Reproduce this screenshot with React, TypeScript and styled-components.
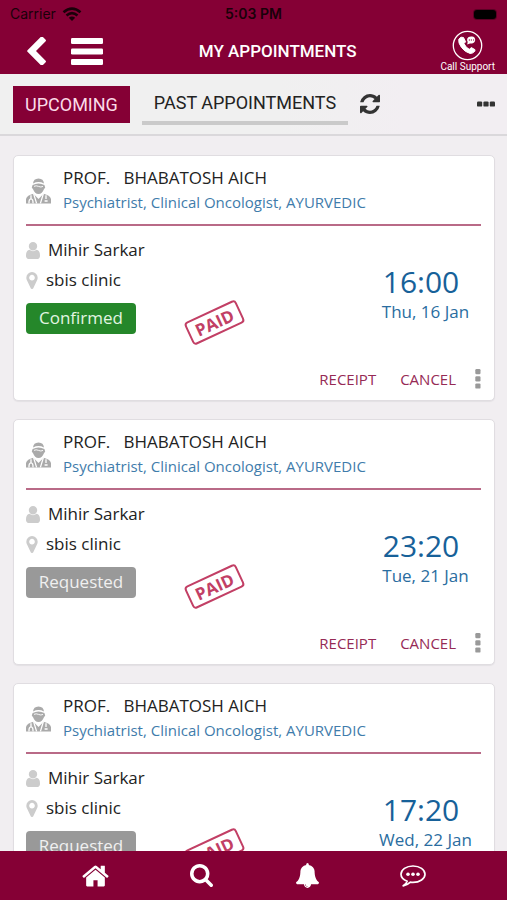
import React from "react";
import styled, { createGlobalStyle } from "styled-components";

const wine = "#850035";
const body = '"Open Sans", sans-serif';
const system = 'Inter, sans-serif';

const GlobalStyle = createGlobalStyle`
  *, *::before, *::after { box-sizing: border-box; }
  body { margin: 0; background: #f1eef1; font-family: ${body}; color: #222; }
  button { margin: 0; padding: 0; border: 0; background: none; color: inherit; font: inherit; cursor: pointer; }
  h1, h2, p { margin: 0; font-weight: 400; }
`;

const Screen = styled.div`
  display: flex;
  flex-direction: column;
  height: 100vh;
`;

const Header = styled.header`
  flex: none;
  background: ${wine};
  color: #fff;
`;

const StatusBar = styled.div`
  display: grid;
  grid-template-columns: 1fr auto 1fr;
  align-items: center;
  height: 28px;
  padding: 0 10px;
  color: #1a0009;
  font: 400 14px/28px ${system};
`;

const Carrier = styled.span`
  display: flex;
  align-items: center;
  gap: 6px;
`;

const Clock = styled.time`
  font-weight: 600;
`;

const Battery = styled.span`
  justify-self: end;
  width: 22px;
  height: 9px;
  margin-right: 1px;
  border-radius: 3px;
  background: #000;
  box-shadow: 0 0 0 1px #5a0024;
`;

const TitleBar = styled.div`
  display: grid;
  grid-template-columns: auto 1fr auto;
  align-items: center;
  height: 46px;
  padding: 0 12px 0 26px;
`;

const HeaderActions = styled.div`
  display: flex;
  align-items: center;
  height: 38px;
  gap: 25px;
`;

const IconButton = styled.button`
  display: flex;
  align-items: center;
  justify-content: center;
`;

const Title = styled.h1`
  padding-left: 12px;
  text-align: center;
  font: 500 17px/40px Roboto, sans-serif;
`;

const SupportButton = styled.button`
  display: flex;
  flex-direction: column;
  align-items: center;
  font: 400 10px/12px Roboto, sans-serif;
`;

const TabBar = styled.nav`
  flex: none;
  display: flex;
  align-items: center;
  gap: 12px;
  height: 62px;
  padding: 0 12px 0 13px;
  background: linear-gradient(90deg, #f0f0f0 55%, #f2eef2 80%);
  border-bottom: 2px solid #dad8db;
`;

const Tab = styled.button<{ $active?: boolean }>`
  height: ${(p) => (p.$active ? "37px" : "41px")};
  padding: 0 12px;
  white-space: nowrap;
  font: 400 18px/37px Roboto, sans-serif;
  color: ${(p) => (p.$active ? "#fbdbe8" : "#222")};
  background: ${(p) => (p.$active ? wine : "transparent")};
  border-bottom: ${(p) => (p.$active ? "0" : "4px solid #cacaca")};
`;

const Spacer = styled.span`
  flex: 1;
`;

const List = styled.main`
  flex: 1;
  min-height: 0;
  overflow-y: auto;
  scrollbar-width: none;
  display: flex;
  flex-direction: column;
  gap: 18px;
  padding: 19px 12px 18px 13px;
`;

const Card = styled.article`
  flex: none;
  padding: 7px 13px 9px 12px;
  background: #fff;
  border: 1px solid #e0dde1;
  border-radius: 5px;
  box-shadow: 0 1px 1px #e3e0e4;
`;

const CardHeader = styled.header`
  display: flex;
  align-items: center;
  gap: 12px;
  height: 63px;
  padding-bottom: 10px;
  border-bottom: 2px solid #b96a87;
`;

const DoctorName = styled.h2`
  font-size: 17px;
  line-height: 27px;
  white-space: pre;
`;

const Specialty = styled.p`
  font-size: 15px;
  line-height: 22px;
  color: #3f7cab;
`;

const CardBody = styled.div`
  display: grid;
  grid-template-columns: 1fr auto 1fr;
  height: 141px;
  padding-top: 9px;
`;

const Details = styled.div`
  display: flex;
  flex-direction: column;
  align-items: flex-start;
`;

const Detail = styled.p`
  display: flex;
  align-items: center;
  gap: 8px;
  font-size: 17px;
  line-height: 30px;
`;

const Status = styled.span<{ $confirmed: boolean }>`
  width: 110px;
  height: 31px;
  margin-top: 8px;
  border-radius: 4px;
  background: ${(p) => (p.$confirmed ? "#25872a" : "#999")};
  color: ${(p) => (p.$confirmed ? "#e2f5e2" : "#f0f0f0")};
  font-size: 17px;
  line-height: 30px;
  text-align: center;
`;

const Stamp = styled.span`
  align-self: start;
  width: 57px;
  height: 25px;
  margin: 75px 79px 0 0;
  border: 2px solid #c23f65;
  border-radius: 4px;
  color: #c23f65;
  font-size: 17px;
  font-weight: 700;
  line-height: 21px;
  text-align: center;
  transform: rotate(-25deg);
`;

const Slot = styled.time`
  justify-self: end;
  display: flex;
  flex-direction: column;
  width: 111px;
  padding-top: 29px;
  text-align: center;
  color: #2a6da0;
  font-size: 17px;
  line-height: 24px;
`;

const Hour = styled.span`
  padding-right: 9px;
  color: #176199;
  font-size: 30px;
  line-height: 36px;
`;

const CardFooter = styled.footer`
  display: flex;
  align-items: center;
  justify-content: flex-end;
  gap: 24px;
  height: 24px;
  color: #962a55;
  font-size: 15px;
  line-height: 24px;
`;

const MoreButton = styled(IconButton)`
  margin-left: -6px;
  width: 7px;
`;

const BottomBar = styled.nav`
  flex: none;
  display: grid;
  grid-template-columns: repeat(4, 1fr);
  align-items: center;
  height: 49px;
  padding: 0 41px 0 43px;
  background: ${wine};
  color: #fff;
`;

const paths = {
  back: "M1427 301l-531 531 531 531q19 19 19 45t-19 45l-166 166q-19 19-45 19t-45-19l-742-742q-19-19-19-45t19-45l742-742q19-19 45-19t45 19l166 166q19 19 19 45t-19 45z",
  refresh: "M1639 1056q0 5-1 7-64 268-268 434.5t-478 166.5q-146 0-282.5-55t-243.5-157l-129 129q-19 19-45 19t-45-19-19-45v-448q0-26 19-45t45-19h448q26 0 45 19t19 45-19 45l-137 137q71 66 161 102t187 36q134 0 250-65t186-179q11-17 53-117 8-23 30-23h192q13 0 22.5 9.5t9.5 22.5zm25-800v448q0 26-19 45t-45 19h-448q-26 0-45-19t-19-45 19-45l138-138q-148-137-349-137-134 0-250 65t-186 179q-11 17-53 117-8 23-30 23h-199q-13 0-22.5-9.5t-9.5-22.5v-7q65-268 270-434.5t480-166.5q146 0 284 55.5t245 156.5l130-129q19-19 45-19t45 19 19 45z",
  search: "M1216 832q0-185-131.5-316.5t-316.5-131.5-316.5 131.5-131.5 316.5 131.5 316.5 316.5 131.5 316.5-131.5 131.5-316.5zm512 832q0 52-38 90t-90 38q-54 0-90-38l-343-342q-179 124-399 124-143 0-273.5-55.5t-225-150-150-225-55.5-273.5 55.5-273.5 150-225 225-150 273.5-55.5 273.5 55.5 225 150 150 225 55.5 273.5q0 220-124 399l343 343q37 37 37 90z",
  home: "M1472 992v480q0 26-19 45t-45 19h-384v-384h-256v384h-384q-26 0-45-19t-19-45v-480q0-1 .5-3t.5-3l575-474 575 474q1 2 1 6zm223-69l-62 74q-8 9-21 11h-3q-13 0-21-7l-692-577-692 577q-12 8-24 7-13-2-21-11l-62-74q-8-10-7-23.5t11-21.5l719-599q32-26 76-26t76 26l244 204v-195q0-14 9-23t23-9h192q14 0 23 9t9 23v408l219 182q10 8 11 21.5t-7 23.5z",
  bell: "M912 1696q0-16-16-16-59 0-101.5-42.5t-42.5-101.5q0-16-16-16t-16 16q0 73 51.5 124.5t124.5 51.5q16 0 16-16zm816-288q0 52-38 90t-90 38h-448q0 106-75 181t-181 75-181-75-75-181h-448q-52 0-90-38t-38-90q50-42 91-88t85-119.5 74.5-158.5 50-206 19.5-260q0-152 117-282.5t307-158.5q-8-19-8-39 0-40 28-68t68-28 68 28 28 68q0 20-8 39 190 28 307 158.5t117 282.5q0 139 19.5 260t50 206 74.5 158.5 85 119.5 91 88z",
  marker: "M1152 640q0-106-75-181t-181-75-181 75-75 181 75 181 181 75 181-75 75-181zm256 0q0 109-33 179l-364 774q-16 33-47.5 52t-67.5 19-67.5-19-46.5-52l-365-774q-33-70-33-179 0-212 150-362t362-150 362 150 150 362z",
  user: "M1536 1399q0 109-62.5 187t-150.5 78h-854q-88 0-150.5-78t-62.5-187q0-85 8.5-160.5t31.5-152 58.5-131 94-89 134.5-34.5q131 128 313 128t313-128q76 0 134.5 34.5t94 89 58.5 131 31.5 152 8.5 160.5zm-256-887q0 159-112.5 271.5t-271.5 112.5-271.5-112.5-112.5-271.5 112.5-271.5 271.5-112.5 271.5 112.5 112.5 271.5z",
};

function Glyph({ name, width, height, box = "0 0 1792 1792", color = "currentColor" }: {
  name: keyof typeof paths; width: number; height: number; box?: string; color?: string;
}) {
  return (
    <svg width={width} height={height} viewBox={box} fill={color} aria-hidden="true">
      <path d={paths[name]} />
    </svg>
  );
}

const WifiIcon = () => (
  <svg width="20" height="14" viewBox="0 0 20 14" fill="none" stroke="#1a0009" strokeWidth="2.6" aria-hidden="true">
    <path d="M1.5 5.2Q10-2 18.5 5.2M4.5 8.4Q10 3.8 15.5 8.4" />
    <path d="M10 14L6.8 10.8Q10 8.4 13.2 10.8Z" fill="#1a0009" stroke="none" />
  </svg>
);

const MenuIcon = () => (
  <svg width="32" height="27" viewBox="0 0 32 27" fill="#fff" aria-hidden="true">
    <rect width="32" height="6" rx="1.3" />
    <rect y="10.5" width="32" height="6" rx="1.3" />
    <rect y="21" width="32" height="6" rx="1.3" />
  </svg>
);

const SupportIcon = () => (
  <svg width="31" height="31" viewBox="0 0 31 31" fill="none" aria-hidden="true">
    <circle cx="15.5" cy="15.5" r="14.2" stroke="#fff" strokeWidth="1.3" />
    <path d="M9 7.2L6.8 9.2Q6 12.8 9.5 17.5T18 23.4Q20.5 23.8 22.8 21.3L23 19.7L19.4 17.6L17.3 19.3Q13.7 17.7 12 13.6L13.6 11.8L11.5 7.5Z" fill="#fff" stroke="#fff" strokeLinejoin="round" />
    <path d="M15.3 8.6Q16.1 6.4 19 6.4H20Q23.2 6.8 23.2 10Q23 13 20 13.4H18L15.2 14.5L15.7 12Q14.6 10.4 15.3 8.6Z" fill="#fff" />
    <path d="M16.8 10h1.2M18.8 10H20M21 10h1.1" stroke={wine} />
  </svg>
);

const DotsIcon = ({ vertical = false }: { vertical?: boolean }) => (
  <svg width={vertical ? 6 : 18} height={vertical ? 20 : 6} viewBox={vertical ? "0 0 6 20" : "0 0 18 6"} fill={vertical ? "#999" : "#333"} aria-hidden="true">
    {[0, 1, 2].map((i) => (
      <rect key={i} x={vertical ? 0.3 : i * 6.4} y={vertical ? i * 7.2 : 0.4} width="5.2" height="5.2" rx="1.2" />
    ))}
  </svg>
);

const DoctorSvg = styled.svg`
  flex: none;
  margin-top: 4px;
`;

const DoctorIcon = () => (
  <DoctorSvg width="25" height="26" viewBox="0 0 25 26" aria-hidden="true">
    <path d="M7 5.4Q7.4 0.6 12.5 0.4Q17.6 0.6 18 5.4Q12.5 2.8 7 5.4Z" fill="#aaa" />
    <path d="M6.6 7Q12.5 4 18.4 7L19.2 9.6L17.8 11.4Q16.4 15.6 12.5 16Q8.6 15.6 7.2 11.4L5.8 9.6Z" fill="#aaa" />
    <path d="M8 8.4Q10 7.2 12.5 8.4T17 8.4" fill="none" stroke="#fff" strokeWidth="0.9" />
    <path d="M0 25.4V21Q1 17.4 7.4 15.8L12.5 21L17.6 15.8Q24 17.4 25 21V25.4Z" fill="#aaa" />
    <path d="M7.6 15.6L10.6 25.4M17.4 15.6L14.4 25.4M5 17.2V20.4M3 25.4Q2.8 20.8 5 20.8T7 25.4M20 17.2V21M18.6 23h3" fill="none" stroke="#fff" strokeWidth="1.3" />
  </DoctorSvg>
);

const ChatIcon = () => (
  <svg width="26" height="22" viewBox="0 0 26 22" fill="none" stroke="#fff" strokeWidth="1.7" aria-hidden="true">
    <path d="M7.2 16.2C3.2 14.6 1 12.2 1 9.2C1 4.7 6.2 1 13 1S25 4.7 25 9.2S19.8 17.4 13 17.4Q11.8 17.4 10.4 17.2Q7.6 20 3.2 20.8Q6.7 18.6 7.2 16.2Z" strokeLinejoin="round" />
    <g fill="#fff" stroke="none">
      <circle cx="8" cy="9.2" r="1.8" />
      <circle cx="13" cy="9.2" r="1.8" />
      <circle cx="18" cy="9.2" r="1.8" />
    </g>
  </svg>
);

const appointments = [
  { hour: "16:00", date: "Thu, 16 Jan", status: "Confirmed" },
  { hour: "23:20", date: "Tue, 21 Jan", status: "Requested" },
  { hour: "17:20", date: "Wed, 22 Jan", status: "Requested" },
];

function AppointmentCard({ hour, date, status }: (typeof appointments)[number]) {
  return (
    <Card>
      <CardHeader>
        <DoctorIcon />
        <div>
          <DoctorName>{"PROF.   BHABATOSH AICH"}</DoctorName>
          <Specialty>Psychiatrist, Clinical Oncologist, AYURVEDIC</Specialty>
        </div>
      </CardHeader>
      <CardBody>
        <Details>
          <Detail>
            <Glyph name="user" width={14} height={17} box="256 128 1280 1536" color="#ccc" />
            Mihir Sarkar
          </Detail>
          <Detail>
            <Glyph name="marker" width={12} height={17} box="384 128 1024 1536" color="#ccc" />
            sbis clinic
          </Detail>
          <Status $confirmed={status === "Confirmed"}>{status}</Status>
        </Details>
        <Stamp>PAID</Stamp>
        <Slot>
          <Hour>{hour}</Hour>
          {date}
        </Slot>
      </CardBody>
      <CardFooter>
        <button type="button">RECEIPT</button>
        <button type="button">CANCEL</button>
        <MoreButton type="button" aria-label="More options"><DotsIcon vertical /></MoreButton>
      </CardFooter>
    </Card>
  );
}

export default function App() {
  return (
    <Screen>
      <GlobalStyle />
      <Header>
        <StatusBar>
          <Carrier>Carrier <WifiIcon /></Carrier>
          <Clock>5:03 PM</Clock>
          <Battery />
        </StatusBar>
        <TitleBar>
          <HeaderActions>
            <IconButton type="button" aria-label="Back">
              <Glyph name="back" width={20} height={28} box="346 71 1100 1522" />
            </IconButton>
            <IconButton type="button" aria-label="Menu"><MenuIcon /></IconButton>
          </HeaderActions>
          <Title>MY APPOINTMENTS</Title>
          <SupportButton type="button"><SupportIcon />Call Support</SupportButton>
        </TitleBar>
      </Header>
      <TabBar>
        <Tab type="button" $active>UPCOMING</Tab>
        <Tab type="button">PAST APPOINTMENTS</Tab>
        <IconButton type="button" aria-label="Refresh">
          <Glyph name="refresh" width={20} height={20} box="128 128 1536 1536" color="#333" />
        </IconButton>
        <Spacer />
        <IconButton type="button" aria-label="More"><DotsIcon /></IconButton>
      </TabBar>
      <List>
        {appointments.map((a) => <AppointmentCard key={a.date} {...a} />)}
      </List>
      <BottomBar>
        <IconButton type="button" aria-label="Home"><Glyph name="home" width={27} height={22} box="64 240 1664 1310" /></IconButton>
        <IconButton type="button" aria-label="Search"><Glyph name="search" width={23} height={23} box="64 128 1664 1664" /></IconButton>
        <IconButton type="button" aria-label="Notifications"><Glyph name="bell" width={23} height={25} box="64 0 1664 1792" /></IconButton>
        <IconButton type="button" aria-label="Messages"><ChatIcon /></IconButton>
      </BottomBar>
    </Screen>
  );
}
